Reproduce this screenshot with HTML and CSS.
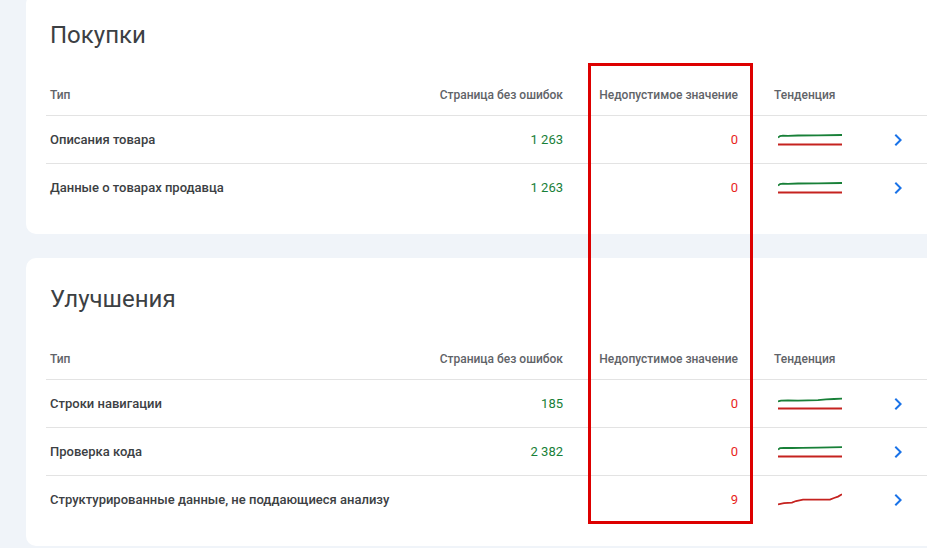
FILE: index.html
```html
<!DOCTYPE html>
<html lang="ru">
<head>
    <meta charset="UTF-8">
    <meta name="viewport" content="width=device-width, initial-scale=1.0">
    <title>Улучшения</title>
    <link rel="stylesheet" href="styles.css">
</head>
<body>
    <div class="page">
        <section class="card card-first">
            <h2 class="card-title">Покупки</h2>
            <div class="table">
                <div class="row head">
                    <div class="cell">Тип</div>
                    <div class="cell num">Страница без ошибок</div>
                    <div class="cell num">Недопустимое значение</div>
                    <div class="cell trend">Тенденция</div>
                    <div class="cell"></div>
                </div>
                <div class="row">
                    <div class="cell name">Описания товара</div>
                    <div class="cell num good">1 263</div>
                    <div class="cell num bad">0</div>
                    <div class="cell trend">
                        <svg class="spark" width="64" height="16" viewBox="0 0 64 16">
                            <polyline points="0,5.5 2,4 5,3.6 10,3.8 20,3.5 40,3.4 64,3" fill="none" stroke="#188038" stroke-width="1.8"/>
                            <polyline points="0,12.5 64,12.5" fill="none" stroke="#c5221f" stroke-width="1.8"/>
                        </svg>
                    </div>
                    <div class="cell go"><svg width="24" height="24" viewBox="0 0 24 24"><path d="M10 6 8.59 7.41 13.17 12l-4.58 4.59L10 18l6-6z" fill="#1a73e8"/></svg></div>
                </div>
                <div class="row">
                    <div class="cell name">Данные о товарах продавца</div>
                    <div class="cell num good">1 263</div>
                    <div class="cell num bad">0</div>
                    <div class="cell trend">
                        <svg class="spark" width="64" height="16" viewBox="0 0 64 16">
                            <polyline points="0,5.5 2,4 5,3.6 10,3.8 20,3.5 40,3.4 64,3" fill="none" stroke="#188038" stroke-width="1.8"/>
                            <polyline points="0,12.5 64,12.5" fill="none" stroke="#c5221f" stroke-width="1.8"/>
                        </svg>
                    </div>
                    <div class="cell go"><svg width="24" height="24" viewBox="0 0 24 24"><path d="M10 6 8.59 7.41 13.17 12l-4.58 4.59L10 18l6-6z" fill="#1a73e8"/></svg></div>
                </div>
            </div>
        </section>

        <section class="card">
            <h2 class="card-title">Улучшения</h2>
            <div class="table">
                <div class="row head">
                    <div class="cell">Тип</div>
                    <div class="cell num">Страница без ошибок</div>
                    <div class="cell num">Недопустимое значение</div>
                    <div class="cell trend">Тенденция</div>
                    <div class="cell"></div>
                </div>
                <div class="row">
                    <div class="cell name">Строки навигации</div>
                    <div class="cell num good">185</div>
                    <div class="cell num bad">0</div>
                    <div class="cell trend">
                        <svg class="spark" width="64" height="16" viewBox="0 0 64 16">
                            <polyline points="0,5.5 3,4.6 10,4.4 20,4.6 30,4.3 40,4.2 48,3.4 56,3 64,2.6" fill="none" stroke="#188038" stroke-width="1.8"/>
                            <polyline points="0,12.5 64,12.5" fill="none" stroke="#c5221f" stroke-width="1.8"/>
                        </svg>
                    </div>
                    <div class="cell go"><svg width="24" height="24" viewBox="0 0 24 24"><path d="M10 6 8.59 7.41 13.17 12l-4.58 4.59L10 18l6-6z" fill="#1a73e8"/></svg></div>
                </div>
                <div class="row">
                    <div class="cell name">Проверка кода</div>
                    <div class="cell num good">2 382</div>
                    <div class="cell num bad">0</div>
                    <div class="cell trend">
                        <svg class="spark" width="64" height="16" viewBox="0 0 64 16">
                            <polyline points="0,5.5 2,4.2 6,3.9 14,4 24,3.8 40,3.6 64,3.2" fill="none" stroke="#188038" stroke-width="1.8"/>
                            <polyline points="0,12.5 64,12.5" fill="none" stroke="#c5221f" stroke-width="1.8"/>
                        </svg>
                    </div>
                    <div class="cell go"><svg width="24" height="24" viewBox="0 0 24 24"><path d="M10 6 8.59 7.41 13.17 12l-4.58 4.59L10 18l6-6z" fill="#1a73e8"/></svg></div>
                </div>
                <div class="row">
                    <div class="cell name">Структурированные данные, не поддающиеся анализу</div>
                    <div class="cell num good"></div>
                    <div class="cell num bad">9</div>
                    <div class="cell trend">
                        <svg class="spark" width="64" height="16" viewBox="0 0 64 16">
                            <polyline points="0,12.3 6,11.2 14,10.7 18,9 25,7.6 52,7.6 56,6 60,4.6 64,2.3" fill="none" stroke="#c5221f" stroke-width="1.8"/>
                        </svg>
                    </div>
                    <div class="cell go"><svg width="24" height="24" viewBox="0 0 24 24"><path d="M10 6 8.59 7.41 13.17 12l-4.58 4.59L10 18l6-6z" fill="#1a73e8"/></svg></div>
                </div>
            </div>
        </section>

        <div class="highlight"></div>
    </div>
</body>
</html>
```

FILE: styles.css
```css
* {
    margin: 0;
    padding: 0;
    box-sizing: border-box;
}

html, body {
    overflow: hidden;
}

body {
    background: #f0f4f9;
    font-family: Roboto, "Liberation Sans", sans-serif;
    color: #3c4043;
}

.page {
    position: relative;
    display: flow-root;
    width: 927px;
}

.card {
    background: #fff;
    border-radius: 10px;
    width: 924px;
    margin-left: 26px;
    padding: 25px 0 23px 20px;
}

.card-first {
    margin-top: -6px;
    margin-bottom: 24px;
}

.card-title {
    font-size: 24px;
    font-weight: 400;
    line-height: 32px;
    color: #3c4043;
    padding-left: 4px;
}

.table {
    width: 904px;
}

.row {
    display: grid;
    grid-template-columns: 1fr 150px 175px 114px 80px;
    align-items: center;
    height: 48px;
    border-bottom: 1px solid #e3e3e3;
}

.row:last-child {
    border-bottom: none;
    height: 47px;
}

.row.head {
    height: 65px;
    align-items: end;
    padding-bottom: 12px;
    font-size: 12px;
    line-height: 16px;
    font-weight: 500;
    color: #5f6368;
}

.cell {
    padding-left: 4px;
    white-space: nowrap;
}

.cell.num {
    text-align: right;
    padding-left: 0;
    padding-right: 18px;
}

.cell.trend {
    padding-left: 18px;
}

.name {
    font-size: 13px;
    font-weight: 500;
    color: #3c4043;
}

.good, .bad {
    font-size: 13px;
}

.good {
    color: #188038;
}

.bad {
    color: #e8251c;
}

.spark {
    display: block;
    margin-left: 4px;
}

.go {
    padding-left: 16px;
}

.go svg {
    display: block;
}

.highlight {
    position: absolute;
    left: 588px;
    top: 63px;
    width: 165px;
    height: 461px;
    border: 3px solid #dd0000;
}
```
